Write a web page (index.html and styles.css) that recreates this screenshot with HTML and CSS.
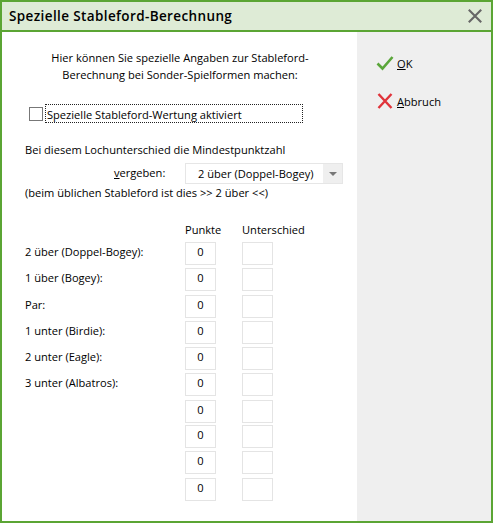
FILE: index.html
```html
<!DOCTYPE html>
<html>
    <head>
        <title>Spezielle Stableford-Berechnung</title>
        <link rel="stylesheet" href="styles.css">
    </head>
    <body>
        <div class="dialog">
            <div class="titlebar">
                <span class="title">Spezielle Stableford-Berechnung</span>
                <svg class="close" width="14" height="14" viewBox="0 0 14 14">
                    <path d="M0.8 0.8 L13.2 13.2 M13.2 0.8 L0.8 13.2" stroke="#666" stroke-width="2.1" fill="none"/>
                </svg>
            </div>
            <div class="main">
                <div class="content">
                    <p class="intro">Hier können Sie spezielle Angaben zur Stableford-<br>Berechnung bei Sonder-Spielformen machen:</p>
                    <div class="check-row">
                        <span class="checkbox"></span>
                        <span class="check-label">Spezielle Stableford-Wertung aktiviert</span>
                    </div>
                    <p class="hint">Bei diesem Lochunterschied die Mindestpunktzahl</p>
                    <div class="select-row">
                        <span class="select-label"><u>v</u>ergeben:</span>
                        <div class="select">
                            <span class="select-value">2 über (Doppel-Bogey)</span>
                            <span class="select-btn"><span class="arrow"></span></span>
                        </div>
                    </div>
                    <p class="note">(beim üblichen Stableford ist dies &gt;&gt; 2 über &lt;&lt;)</p>
                    <div class="head-row">
                        <span class="head-p">Punkte</span>
                        <span>Unterschied</span>
                    </div>
                    <div class="rows">
                        <div class="row"><span class="row-label">2 über (Doppel-Bogey):</span><span class="field">0</span><span class="field"></span></div>
                        <div class="row"><span class="row-label">1 über (Bogey):</span><span class="field">0</span><span class="field"></span></div>
                        <div class="row loose"><span class="row-label">Par:</span><span class="field">0</span><span class="field"></span></div>
                        <div class="row"><span class="row-label">1 unter (Birdie):</span><span class="field">0</span><span class="field"></span></div>
                        <div class="row"><span class="row-label">2 unter (Eagle):</span><span class="field">0</span><span class="field"></span></div>
                        <div class="row"><span class="row-label">3 unter (Albatros):</span><span class="field">0</span><span class="field"></span></div>
                        <div class="row loose"><span class="row-label"></span><span class="field">0</span><span class="field"></span></div>
                        <div class="row tight"><span class="row-label"></span><span class="field">0</span><span class="field"></span></div>
                        <div class="row"><span class="row-label"></span><span class="field">0</span><span class="field"></span></div>
                        <div class="row loose"><span class="row-label"></span><span class="field">0</span><span class="field"></span></div>
                    </div>
                </div>
                <div class="side">
                    <div class="action">
                        <svg width="18" height="16" viewBox="0 0 18 16">
                            <path d="M1.5 8.5 L6.5 13.5 L16.5 2" stroke="#5aa63a" stroke-width="2.6" fill="none"/>
                        </svg>
                        <span><u>O</u>K</span>
                    </div>
                    <div class="action action-cancel">
                        <svg width="18" height="16" viewBox="0 0 16 16">
                            <path d="M1.5 1 L14.5 15 M14.5 1 L1.5 15" stroke="#e0333a" stroke-width="2.4" fill="none"/>
                        </svg>
                        <span><u>A</u>bbruch</span>
                    </div>
                </div>
            </div>
        </div>
    </body>
</html>
```

FILE: styles.css
```css
html, body {
    margin: 0;
    padding: 0;
}

body {
    font-family: "Open Sans", sans-serif;
    font-size: 11.1px;
    color: #000;
    background-color: white;
}

.dialog {
    width: 493px;
    height: 523px;
    box-sizing: border-box;
    border: 2px solid #5ba534;
    display: flex;
    flex-direction: column;
}

.titlebar {
    height: 28px;
    flex-shrink: 0;
    background-color: #deebd6;
    border-bottom: 2px solid #5ba534;
    display: flex;
    align-items: center;
    justify-content: space-between;
    padding: 0 9px 0 7px;
}

.title {
    font-size: 13.5px;
    font-weight: 600;
    letter-spacing: 0.38px;
    color: #000;
}

.main {
    flex: 1;
    display: flex;
    min-height: 0;
}

.content {
    width: 355px;
    box-sizing: border-box;
    padding: 17px 0 0 23px;
}

.side {
    flex: 1;
    background-color: #efefef;
    padding: 23px 0 0 19px;
}

.action {
    display: flex;
    align-items: center;
    gap: 3px;
    height: 16px;
}

.action-cancel {
    margin-top: 22px;
}

.intro {
    margin: 0;
    width: 310px;
    text-align: center;
    line-height: 17px;
}

.check-row {
    display: flex;
    align-items: center;
    margin: 21px 0 0 4px;
}

.checkbox {
    width: 12px;
    height: 12px;
    border: 1px solid #777;
    background-color: white;
}

.check-label {
    margin-left: 2px;
    width: 258px;
    height: 19px;
    line-height: 19px;
    box-sizing: border-box;
    border: 1px dotted #222;
    padding-left: 1px;
}

.hint {
    margin: 19px 0 0 0;
    line-height: 15px;
}

.select-row {
    display: flex;
    align-items: center;
    margin-top: 6px;
}

.select-label {
    width: 160px;
    padding-left: 89px;
    box-sizing: border-box;
    margin-top: -2px;
}

.select {
    width: 158px;
    height: 21px;
    box-sizing: border-box;
    border: 1px solid #e6e6e6;
    display: flex;
    align-items: center;
    justify-content: space-between;
}

.select-value {
    padding-left: 12px;
}

.select-btn {
    width: 19px;
    height: 19px;
    background-color: #efefef;
    display: flex;
    align-items: center;
    justify-content: center;
}

.arrow {
    width: 0;
    height: 0;
    border-left: 4px solid transparent;
    border-right: 4px solid transparent;
    border-top: 4px solid #777;
}

.note {
    margin: 1px 0 0 0;
    line-height: 15px;
}

.head-row {
    display: flex;
    margin-top: 22px;
    line-height: 15px;
}

.head-p {
    margin-left: 160px;
    width: 57px;
}

.rows {
    margin-top: 5px;
    display: flex;
    flex-direction: column;
    gap: 3px;
}

.row {
    display: flex;
    height: 23px;
}

.loose {
    margin-top: 1px;
}

.tight {
    margin-top: -1px;
}

.row-label {
    width: 160px;
    line-height: 20px;
}

.field {
    width: 31px;
    height: 23px;
    box-sizing: border-box;
    border: 1px solid #e4e4e4;
    margin-right: 26px;
    text-align: center;
    line-height: 18px;
}
```
